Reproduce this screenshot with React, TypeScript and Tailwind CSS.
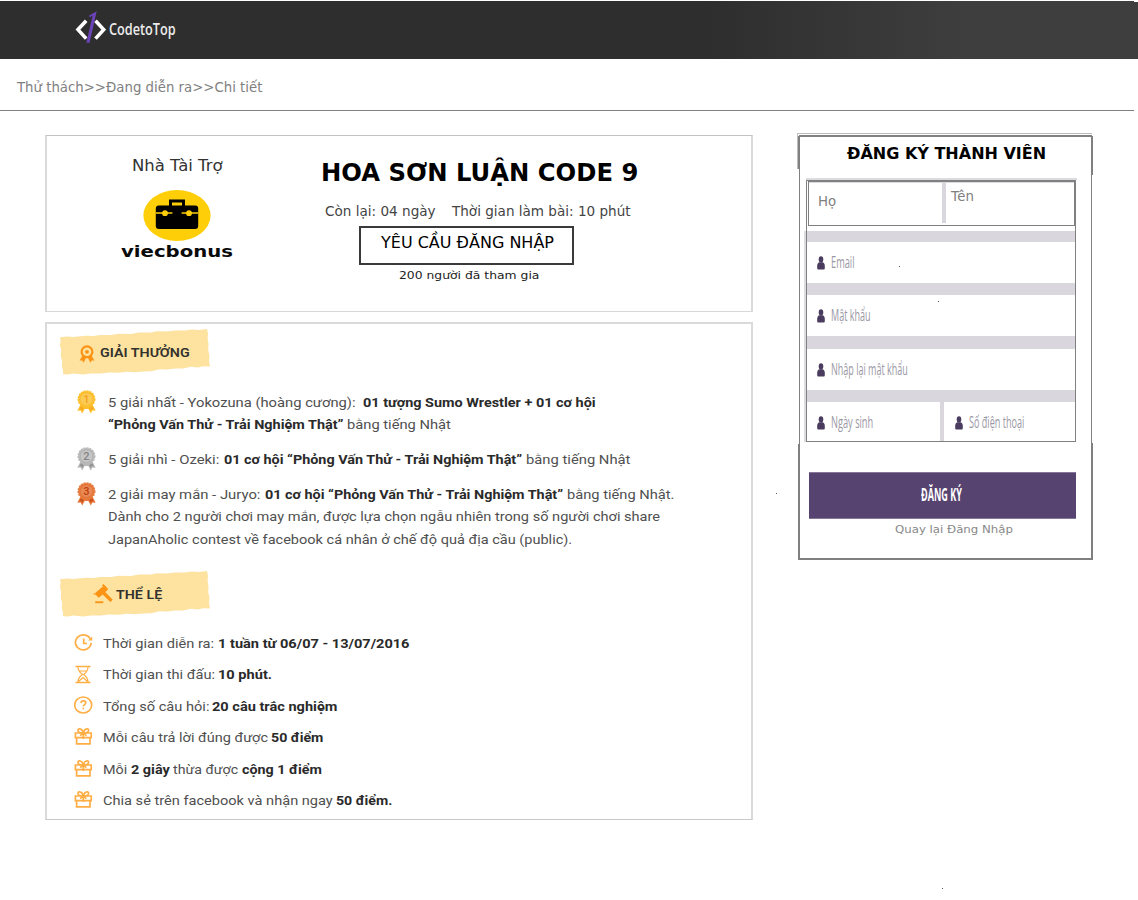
import { useLayoutEffect, useRef, useState, type ReactNode } from "react";

/* Text condensed or expanded horizontally so that it fills its box. */
function Fit({ className, children }: { className: string; children: ReactNode }) {
  const box = useRef<HTMLSpanElement>(null);
  const inner = useRef<HTMLSpanElement>(null);
  const [scale, setScale] = useState(1);
  useLayoutEffect(() => {
    if (box.current && inner.current) {
      const target = parseFloat(getComputedStyle(box.current).width);
      setScale(target / inner.current.offsetWidth);
    }
  }, []);
  return (
    <span ref={box} className={"block shrink-0 whitespace-pre " + className}>
      <span
        ref={inner}
        className="inline-block origin-left align-top"
        style={{ transform: `scaleX(${scale})` }}
      >
        {children}
      </span>
    </span>
  );
}

function Logo() {
  return (
    <svg className="h-8 w-[31px] shrink-0" viewBox="0 0 31 32" fill="none">
      <path d="M11.2 9.8 3 18.6l8.2 9" stroke="#fff" strokeWidth="3.6" />
      <path d="M20.5 9.8l8.2 8.8-8.2 9" stroke="#fff" strokeWidth="3.6" />
      <path d="M14.2 4.6 21.7.3 14.6 31.7h-3.2L17.6 4.6l-3 1.8z" fill="#6b43b8" />
    </svg>
  );
}

function Briefcase() {
  return (
    <svg className="mt-[14px] h-[51px] w-[68px] self-center" viewBox="0 0 68 51">
      <ellipse cx="34" cy="25.5" rx="33.6" ry="25.4" fill="#fecf08" />
      <path d="M27.5 16v-5h13v5" fill="none" stroke="#000" strokeWidth="3" />
      <rect x="12.8" y="15.5" width="42.4" height="23.5" rx="3" fill="#000" />
      <path d="M12.8 23h16.6M38.6 23h16.6" stroke="#fecf08" strokeWidth="1.4" />
      <circle cx="22" cy="23.2" r="2.9" fill="#fecf08" />
      <circle cx="46" cy="23.2" r="2.9" fill="#fecf08" />
    </svg>
  );
}

function Banner({ className, children }: { className: string; children: ReactNode }) {
  return (
    <div className={"relative ml-3 flex h-12 w-[152px] items-center " + className}>
      <svg className="absolute inset-0 h-full w-full" viewBox="0 0 152 48">
        <path
          d="M1 9.2L8 8.6 14 9 27 7.8 34 8 42 6.9 52 7 60 5.700 72 5.900 80 4.600 92 4.600 98 3.300 108 3.400 116 2.400 126 2.400 133 1.600 140 1.900 148 1 149 6 148.600 11 149.500 16 149.200 22 150.500 28 150 33 151 38.500 144 38.200 139 39.400 132 38.800 124 40.400 116 40.600 108 41.600 101 41.200 92 43.200 84 43.400 76 44.200 68 43.800 60 44.800 50 44.400 42 45.600 32 45.400 24 46.400 14 45.600 9 46.600 4 46.200 4 42 2.800 38 3.200 33 1.700 28 2.200 22 1 17 1.600 13z"
          fill="#fde2a0"
        />
      </svg>
      {children}
    </div>
  );
}

function AwardIcon() {
  return (
    <svg className="relative ml-[20px] mt-[3px] h-[18px] w-4" viewBox="0 0 16 18">
      <path d="M3.5 10.5.6 15.6l2.7-.2 1.4 2.3 2.6-5.5zM12.5 10.5l2.9 5.1-2.7-.2-1.4 2.3-2.6-5.5z" fill="#fb9415" />
      <circle cx="8" cy="6.8" r="5.4" fill="#fde2a0" stroke="#fb9415" strokeWidth="2.2" />
      <circle cx="8" cy="6.8" r="1.9" fill="#fb9415" />
    </svg>
  );
}

function GavelIcon() {
  return (
    <svg className="relative ml-[34px] mt-px h-5 w-5" viewBox="0 0 20 20" fill="#fb9415">
      <path d="M1.6 9.4 10.4 2l3.8 4.4-2 1.7 7.6 7.7-2.5 2.2-7.6-7.6L5.6 13.8z" />
      <path d="M.6 9.4 2 11M9.2 1.6l1.4-1 4 4.4-1 1.2" stroke="#fb9415" strokeWidth="1" />
      <rect x="2.2" y="17.3" width="8" height="1.9" />
    </svg>
  );
}

function Medal({ n, main, ring, dark }: { n: string; main: string; ring: string; dark: string }) {
  return (
    <svg className="-mt-px h-6 w-[19px] shrink-0" viewBox="0 0 19 24">
      <path d="M3.5 14.5.3 20.8l3.3-.3 1.6 3L9 16.5zM15.5 14.5l3.2 6.3-3.3-.3-1.6 3L10 16.5z" fill={main} />
      <path d="M3.5 16.5l-1.2 3 2-.2 1 1.8 2.2-4zM15.5 16.5l1.2 3-2-.2-1 1.8-2.2-4z" fill={dark} fillOpacity="0.7" />
      <path d="M6 16h7l-1.2 3H7.2z" fill={main} />
      <circle cx="9.5" cy="9.2" r="8.3" fill={main} stroke={main} strokeWidth="1.4" strokeDasharray="2 1" />
      <circle cx="9.5" cy="9.2" r="6.2" fill={ring} stroke={dark} strokeOpacity="0.3" strokeWidth="0.6" />
      <text x="9.5" y="13.2" textAnchor="middle" fontSize="11" fontFamily="Roboto" fontWeight="500" fill={dark}>
        {n}
      </text>
    </svg>
  );
}

const iconBox = "mb-[2px] h-[19px] w-[19px] shrink-0";

function ClockIcon() {
  return (
    <svg className={iconBox} viewBox="0 0 19 19" fill="none" stroke="#ffae45" strokeWidth="1.7">
      <path d="M16.2 5.6A7.9 7.5 0 1 0 17.2 9.8M9.7 5.5v5h3.3" />
      <path d="M18.2 3.600v3.800h-4z" fill="#ffae45" stroke="none" />
    </svg>
  );
}

function HourglassIcon() {
  return (
    <svg className={iconBox} viewBox="0 0 19 19" fill="none" stroke="#ffae45" strokeWidth="1.2">
      <path d="M1.5 1.5h15M1.5 17.5h15" strokeWidth="1.7" />
      <path d="M4 2c0 4 1.5 5.5 4.5 7.5C5.5 11.5 4 13 4 17M14 2c0 4-1.5 5.5-4.5 7.5C12.500 11.500 14 13 14 17M4.500 16.500l4.500-4 4.500 4M5.500 6h7" />
    </svg>
  );
}

function QuestionIcon() {
  return (
    <svg className={iconBox} viewBox="0 0 19 19" fill="none" stroke="#ffae45" strokeWidth="1.6">
      <ellipse cx="9.2" cy="9" rx="8.5" ry="8" />
      <path d="M7 7.1c0-3 4.700-2.800 4.700-.2 0 1.800-2.400 1.600-2.400 3.600M9.300 11.700v1.500" />
    </svg>
  );
}

function GiftIcon() {
  return (
    <svg className={iconBox} viewBox="0 0 19 19" fill="none" stroke="#ffae45" strokeWidth="1.7">
      <path d="M1.400 6h15.800v4.700H1.400zM2.600 10.700h13.400v6.100H2.600zM9.300 5.500v6.500" />
      <path d="M9.300 6C8.300 1.300 4 .9 4 3.400 4 5 6 5.800 9.300 6zm0 0c1-4.700 5.300-5.100 5.300-2.600C14.600 5 12.600 5.800 9.300 6zM9.300 6 6.200 8.600M9.300 6l3.100 2.600" />
    </svg>
  );
}

function UserIcon() {
  return (
    <svg className="h-[14px] w-2 shrink-0" viewBox="0 0 8 14" fill="#4a3c5e">
      <ellipse cx="4" cy="3.4" rx="2.3" ry="3.1" />
      <path d="M.2 9.8C.2 7.2 1.5 6.4 2.5 6.2h3C6.5 6.4 7.800 7.200 7.800 9.800v2.500c0 .8-.5 1.200-1.200 1.200h-5.200C.7 13.500.2 13.100.2 12.300z" />
    </svg>
  );
}

function Field({ className, width, label }: { className: string; width: string; label: string }) {
  return (
    <div className={"flex items-center bg-white " + className}>
      <UserIcon />
      <Fit
        className={
          "-mt-[2px] ml-[5.5px] font-['Open_Sans',sans-serif] text-[16.5px] leading-[22px] text-[#9a98a4] " + width
        }
      >
        {label}
      </Fit>
    </div>
  );
}

const bold = "font-bold text-[#2a2a2a] ";
const line = "flex h-[22.5px] leading-[22.5px]";
const rule = "flex h-[31.4px] items-center leading-[31.4px]";
const strip = "bg-[#d9d7dd]";

export default function App() {
  return (
    <div className="relative h-[900px] w-[1138px] overflow-hidden bg-white font-['DejaVu_Sans',sans-serif]">
      <header className="mt-px flex h-[58px] items-start bg-linear-to-r from-[#2e2e2e] from-62% to-[#3e3e3e] to-85% pl-[75px] pt-[10px]">
        <Logo />
        <Fit className="ml-[2.5px] mt-[8px] w-[67px] font-['Open_Sans',sans-serif] text-[16.5px] font-semibold leading-5 text-[#ebebeb]">
          CodetoTop
        </Fit>
      </header>

      <nav className="flex h-[52px] w-[1134px] items-center border-b border-[#808080] pl-[17px] pt-[6px] text-[13.3px] text-[#808080]">
        <Fit className="w-[245px]">Thử thách&gt;&gt;Đang diễn ra&gt;&gt;Chi tiết</Fit>
      </nav>

      <main className="flex items-start pl-[45px] pt-6">
        <div className="w-[708px]">
          <section className="flex h-[177px] border-x-2 border-b border-t border-x-[#dadada] border-b-[#d8d8d8] border-t-[#c2c2c2]">
            <div className="flex w-[260px] flex-col items-center pt-[20px]">
              <Fit className="w-[90.5px] text-[16px] leading-5 text-[#333]">Nhà Tài Trợ</Fit>
              <Briefcase />
              <Fit className="mt-px w-[112px] text-[16px] font-bold leading-5 text-[#0a0a0a]">viecbonus</Fit>
            </div>
            <div className="flex flex-col items-start pt-[22px]">
              <Fit className="ml-[13.5px] w-[317.5px] text-[24px] font-bold leading-[30px] text-black">
                HOA SƠN LUẬN CODE 9
              </Fit>
              <div className="mt-[13px] flex text-[14.5px] leading-5 text-[#444]">
                <Fit className="ml-[17.5px] w-[110.5px]">Còn lại: 04 ngày</Fit>
                <Fit className="ml-[16.5px] w-[178.5px]">Thời gian làm bài: 10 phút</Fit>
              </div>
              <div className="ml-[52px] mt-[5px] flex h-[39px] w-[215px] justify-center border-2 border-[#3a3a3a] pl-[2px] pt-[5px] text-[16px] leading-5 text-black">
                YÊU CẦU ĐĂNG NHẬP
              </div>
              <Fit className="ml-[91.5px] mt-[3px] w-[140.5px] text-[11px] leading-4 text-[#222]">
                200 người đã tham gia
              </Fit>
            </div>
          </section>

          <section className="mt-[10px] h-[498px] border-x-2 border-b border-t-2 border-[#dadada] border-b-[#c8c8c8] font-[Roboto,sans-serif] text-[13.5px] text-[#505050]">
            <Banner className="mt-1">
              <AwardIcon />
              <Fit className="relative -mt-px ml-[5px] w-[90px] font-semibold leading-5 text-[#33312c]">GIẢI THƯỞNG</Fit>
            </Banner>

            <ul className="mt-[14.5px] pl-[30px]">
              <li className="flex">
                <Medal n="1" main="#fdc02f" ring="#fbcb55" dark="#f5a01e" />
                <div className="ml-[12px]">
                  <div className={line}>
                    <Fit className="w-[248px]">5 giải nhất - Yokozuna (hoàng cương):</Fit>
                    <Fit className={bold + "ml-[7px] w-[233px]"}>01 tượng Sumo Wrestler + 01 cơ hội</Fit>
                  </div>
                  <div className={line}>
                    <Fit className={bold + "w-[235px]"}>“Phỏng Vấn Thử - Trải Nghiệm Thật”</Fit>
                    <Fit className="ml-[4px] w-[103.5px]">bằng tiếng Nhật</Fit>
                  </div>
                </div>
              </li>
              <li className="mt-[12.5px] flex">
                <Medal n="2" main="#b9b9b9" ring="#c6c6c6" dark="#858585" />
                <div className={"ml-[12px] " + line}>
                  <Fit className="w-[111.5px]">5 giải nhì - Ozeki:</Fit>
                  <Fit className={bold + "ml-[4px] w-[298.5px]"}>01 cơ hội “Phỏng Vấn Thử - Trải Nghiệm Thật”</Fit>
                  <Fit className="ml-[3.5px] w-[104px]">bằng tiếng Nhật</Fit>
                </div>
              </li>
              <li className="mt-[11.5px] flex">
                <Medal n="3" main="#e77a3c" ring="#e98a55" dark="#c0420f" />
                <div className="ml-[12px]">
                  <div className={line}>
                    <Fit className="w-[153px]">2 giải may mắn - Juryo:</Fit>
                    <Fit className={bold + "ml-[3.5px] w-[298.5px]"}>01 cơ hội “Phỏng Vấn Thử - Trải Nghiệm Thật”</Fit>
                    <Fit className="ml-[3.5px] w-[107.5px]">bằng tiếng Nhật.</Fit>
                  </div>
                  <div className={line}>
                    <Fit className="w-[552px]">
                      Dành cho 2 người chơi may mắn, được lựa chọn ngẫu nhiên trong số người chơi share
                    </Fit>
                  </div>
                  <div className={line}>
                    <Fit className="w-[464px]">JapanAholic contest về facebook cá nhân ở chế độ quả địa cầu (public).</Fit>
                  </div>
                </div>
              </li>
            </ul>

            <Banner className="mt-[19.5px]">
              <GavelIcon />
              <Fit className="relative ml-[3px] w-[46.5px] font-semibold leading-5 text-[#33312c]">THỂ LỆ</Fit>
            </Banner>

            <ul className="mt-[10.5px] pl-[26.5px]">
              <li className={rule}>
                <ClockIcon />
                <Fit className="ml-[10px] w-[111.5px]">Thời gian diễn ra:</Fit>
                <Fit className={bold + "ml-[4px] w-[192px]"}>1 tuần từ 06/07 - 13/07/2016</Fit>
              </li>
              <li className={rule}>
                <HourglassIcon />
                <Fit className="ml-[10px] w-[111.5px]">Thời gian thi đấu:</Fit>
                <Fit className={bold + "ml-[4px] w-[54px]"}>10 phút.</Fit>
              </li>
              <li className={rule}>
                <QuestionIcon />
                <Fit className="ml-[10px] w-[106px]">Tổng số câu hỏi:</Fit>
                <Fit className={bold + "ml-[3.5px] w-[125px]"}>20 câu trắc nghiệm</Fit>
              </li>
              <li className={rule}>
                <GiftIcon />
                <Fit className="ml-[10px] w-[164.5px]">Mỗi câu trả lời đúng được</Fit>
                <Fit className={bold + "ml-[4px] w-[52.5px]"}>50 điểm</Fit>
              </li>
              <li className={rule}>
                <GiftIcon />
                <Fit className="ml-[10px] w-[24.5px]">Mỗi</Fit>
                <Fit className={bold + "ml-[3.5px] w-[38.5px]"}>2 giây</Fit>
                <Fit className="ml-[4px] w-[65px]">thừa được</Fit>
                <Fit className={bold + "ml-[4px] w-[79.5px]"}>cộng 1 điểm</Fit>
              </li>
              <li className={rule}>
                <GiftIcon />
                <Fit className="ml-[10px] w-[230px]">Chia sẻ trên facebook và nhận ngay</Fit>
                <Fit className={bold + "ml-[3.5px] w-[56.5px]"}>50 điểm.</Fit>
              </li>
            </ul>
          </section>
        </div>

        <aside className="relative ml-[46px] h-[425px] w-[293px] border-x border-y-2 border-[#808080] pt-[5px]">
          <span className="absolute -left-[3px] -top-[4px] h-px w-[295px] bg-[#bcbcbc]" />
          <span className="absolute -left-[3px] -top-[4px] h-[36px] w-px bg-[#bcbcbc]" />
          <span className="absolute -left-[2px] -top-px h-[33px] w-px bg-[#808080]" />
          <span className="absolute -top-px left-[292px] h-[39px] w-px bg-[#808080]" />
          <span className="absolute -left-[2px] top-[307px] h-[116px] w-px bg-[#808080]" />
          <span className="absolute left-[292px] top-[306px] h-[117px] w-px bg-[#808080]" />

          <h2 className="h-6 pl-[47px] text-[16px] font-bold leading-6 text-black">ĐĂNG KÝ THÀNH VIÊN</h2>
          <div className="ml-[6px] mt-[12px] h-[2px] w-[271px] bg-[#dcdbe0]" />

          <form className="relative ml-[6px] h-[262px] w-[270px] border border-[#808080]">
            <span className="absolute -left-[3px] top-[50px] h-[211px] w-[2px] bg-[#dcdbe0]" />
            <div className="ml-px flex h-[45px] w-[267px] border border-[#808080] text-[13.33px] leading-5 text-[#808080]">
              <div className="h-full w-[133px] border-t border-[#dcdbe0] pl-[9px] pt-[9px]">Họ</div>
              <div className="h-[41px] w-1 bg-[#d9d7dd]" />
              <div className="h-full grow border-t border-[#dcdbe0] pl-[5px] pt-[4px]">Tên</div>
            </div>
            <div className={"mt-[5px] h-[11px] " + strip} />
            <Field className="h-[41px] pl-[10px]" width="w-[23.5px]" label="Email" />
            <div className={"h-3 " + strip} />
            <Field className="h-[41px] pl-[10px]" width="w-[39.5px]" label="Mật khẩu" />
            <div className={"h-[13px] " + strip} />
            <Field className="h-[41px] pl-[10px]" width="w-[77px]" label="Nhập lại mật khẩu" />
            <div className={"h-3 " + strip} />
            <div className={"flex gap-1 " + strip}>
              <Field className="h-[39px] w-[133px] pl-[10px] pt-[2px]" width="w-[42px]" label="Ngày sinh" />
              <Field className="h-[39px] grow pl-[11px] pt-[2px]" width="w-[55px]" label="Số điện thoại" />
            </div>
          </form>

          <button
            type="button"
            className="ml-[9px] mt-[30px] flex h-[47px] w-[267px] justify-center border-y border-[#85779a] bg-[#57436f] pt-[11px]"
          >
            <Fit className="mr-[2px] w-[41px] text-left font-['Open_Sans',sans-serif] text-[17px] font-bold leading-[22px] text-white">
              ĐĂNG KÝ
            </Fit>
          </button>
          <Fit className="ml-[95px] mt-[3px] w-[117.5px] text-[11px] leading-4 text-[#888]">Quay lại Đăng Nhập</Fit>
        </aside>
      </main>

      <span className="absolute left-[899px] top-[266px] h-px w-px bg-[#555]" />
      <span className="absolute left-[938px] top-[301px] h-px w-px bg-[#555]" />
      <span className="absolute left-[776px] top-[493px] h-px w-px bg-[#555]" />
      <span className="absolute left-[942px] top-[888px] h-px w-px bg-[#555]" />
      <span className="absolute left-[1134px] top-px h-px w-1 bg-white" />
    </div>
  );
}
